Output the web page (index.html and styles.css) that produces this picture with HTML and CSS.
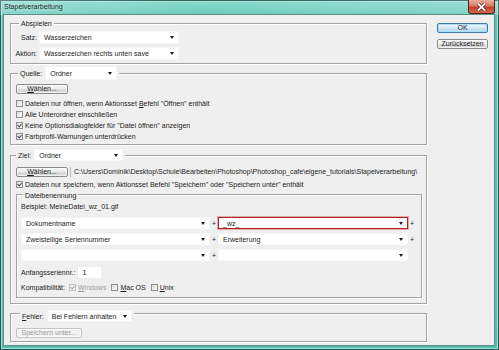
FILE: index.html
```html
<!DOCTYPE html>
<html lang="de">
<head>
<meta charset="utf-8">
<title>Stapelverarbeitung</title>
<link rel="stylesheet" href="styles.css">
</head>
<body>
<div class="window">
  <div class="titlebar">
    <span class="title">Stapelverarbeitung</span>
    <div class="close">
      <svg width="11" height="8" viewBox="0 0 11 8"><path d="M2 0.5 L9 7.5 M9 0.5 L2 7.5" stroke="#5a1a10" stroke-width="3.2"/><path d="M2 0.5 L9 7.5 M9 0.5 L2 7.5" stroke="#fff" stroke-width="1.8"/></svg>
    </div>
  </div>
  <div class="client">
    <div class="main">
      <div class="group g-play">
        <div class="legend lg-play">Abspielen</div>
        <div class="form-grid">
          <span class="lbl">Satz:</span>
          <div class="select s-satz"><span>Wasserzeichen</span><i class="arrow"></i></div>
          <span class="lbl">Aktion:</span>
          <div class="select s-satz"><span>Wasserzeichen rechts unten save</span><i class="arrow"></i></div>
        </div>
      </div>

      <div class="group g-src">
        <div class="legend lg-src"><span>Quelle:</span><div class="select s-src"><span>Ordner</span><i class="arrow"></i></div></div>
        <button class="btn b-choose"><u>W</u>ählen...</button>
        <div class="checks">
          <div class="chk"><span class="box"></span><span>Dateien nur öffnen, wenn Aktionsset <u>B</u>efehl "Öffnen" enthält</span></div>
          <div class="chk"><span class="box"></span><span>Alle Unterordner einschließen</span></div>
          <div class="chk"><span class="box on"></span><span>Keine Optionsdialogfelder für "Datei öffnen" anzeigen</span></div>
          <div class="chk"><span class="box on"></span><span>Farbprofil-Warnungen unterdrücken</span></div>
        </div>
      </div>

      <div class="group g-dst">
        <div class="legend lg-dst"><span>Ziel:</span><div class="select s-dst"><span>Ordner</span><i class="arrow"></i></div></div>
        <div class="pathrow">
          <button class="btn b-choose"><u>W</u>ählen...</button>
          <span class="path">C:\Users\Dominik\Desktop\Schule\Bearbeiten\Photoshop\Photoshop_cafe\eigene_tutorials\Stapelverarbeitung\</span>
        </div>
        <div class="chk chk-save"><span class="box on"></span><span>Dateien nur speichern, wenn Aktionsset Befehl "Speichern" oder "Speichern unter" enthält</span></div>

        <div class="group g-name">
          <div class="legend lg-name">Dateibenennung</div>
          <div class="example">Beispiel: MeineDatei_wz_01.gif</div>
          <div class="name-grid">
            <div class="select"><span>Dokumentname</span><i class="arrow"></i></div>
            <span class="plus">+</span>
            <div class="select focus"><span>_wz_</span><i class="arrow"></i></div>
            <span class="plus">+</span>

            <div class="select"><span>Zweistellige Seriennummer</span><i class="arrow"></i></div>
            <span class="plus">+</span>
            <div class="select"><span>Erweiterung</span><i class="arrow"></i></div>
            <span class="plus">+</span>

            <div class="select"><span></span><i class="arrow"></i></div>
            <span class="plus">+</span>
            <div class="select"><span></span><i class="arrow"></i></div>
            <span></span>
          </div>
          <div class="serial"><span>Anfangsseriennr.:</span><span class="input">1</span></div>
          <div class="compat">
            <span class="compat-lbl">Kompatibilität:</span>
            <span class="chk dis"><span class="box on"></span><span><u>W</u>indows</span></span>
            <span class="chk"><span class="box"></span><span><u>M</u>ac OS</span></span>
            <span class="chk"><span class="box"></span><span><u>U</u>nix</span></span>
          </div>
        </div>
      </div>

      <div class="group g-err">
        <div class="legend lg-err"><span><u>F</u>ehler:</span><div class="select s-err"><span>Bei Fehlern anhalten</span><i class="arrow"></i></div></div>
        <button class="btn b-saveas" disabled>Speichern unter...</button>
      </div>
    </div>

    <div class="side">
      <button class="btn b-ok">OK</button>
      <button class="btn b-reset">Zurücksetzen</button>
    </div>
  </div>
</div>
</body>
</html>
```

FILE: styles.css
```css
* { box-sizing: border-box; margin: 0; padding: 0; }
html, body { width: 499px; height: 350px; overflow: hidden; }
body {
  font-family: "Liberation Sans", Arial, sans-serif;
  font-size: 7px;
  color: #1c1c1c;
  background: #4fb8a8;
}
u { text-decoration: underline; }

.window {
  width: 499px;
  height: 350px;
  display: flex;
  flex-direction: column;
  background: linear-gradient(180deg, #86d8cb 0px, #6fcfbf 10px, #5bc3b3 16px, #55bdad 100%);
  box-shadow: inset 0 0 0 1px #24574f, inset 0 0 0 2px #9fe3d8;
}

.titlebar {
  height: 15px;
  display: flex;
  align-items: flex-start;
  padding-left: 4px;
  background: linear-gradient(90deg, rgba(255,255,255,0.25) 0, rgba(255,255,255,0.05) 40%, rgba(255,255,255,0.2) 100%);
}
.title {
  line-height: 14px;
  color: #0b1f1c;
  text-shadow: 0 0 3px rgba(255,255,255,0.9);
}
.close {
  margin-left: auto;
  margin-right: 4px;
  width: 27px;
  height: 14px;
  border: 1px solid #5a2218;
  border-top: none;
  border-radius: 0 0 3px 3px;
  background: linear-gradient(180deg, #eab0a0 0%, #d77a66 45%, #c0432c 55%, #d0684e 100%);
  display: flex;
  align-items: center;
  justify-content: center;
}

.client {
  margin: 0 5px 0 4px;
  height: 330px;
  background: #efefef;
  box-shadow: 0 0 0 1px #5f8f87;
  display: flex;
  padding: 8px 0 0 6px;
}
.main { width: 417px; display: flex; flex-direction: column; }
.side { width: 51px; margin-left: 10px; display: flex; flex-direction: column; }

.group {
  border: 1px solid #a3a3a3;
  box-shadow: inset 1px 1px 0 #fff, 1px 1px 0 #fff;
}
.legend {
  background: #efefef;
  width: max-content;
  display: flex;
  align-items: center;
  padding: 0 2px;
}

/* Abspielen */
.g-play { height: 41px; }
.lg-play { height: 9px; margin: -5px 0 0 8px; }
.form-grid {
  display: grid;
  grid-template-columns: 26px 140px;
  grid-auto-rows: 13px;
  column-gap: 2px;
  row-gap: 3px;
  margin-top: 3px;
  align-items: center;
}
.lbl { text-align: right; }

.select {
  height: 13px;
  background: #fff;
  border: 1px solid #f6f6f6;
  display: flex;
  align-items: center;
  justify-content: space-between;
  padding: 0 4px 0 4px;
  white-space: nowrap;
  line-height: 9px;
}
.arrow {
  width: 0; height: 0;
  border-left: 2px solid transparent;
  border-right: 2px solid transparent;
  border-top: 3px solid #1a1a1a;
  flex: none;
}

/* Quelle */
.g-src { margin-top: 9px; height: 72px; }
.lg-src { height: 14px; margin: -8px 0 0 7px; gap: 3px; }
.s-src { width: 72px; height: 14px; }

.btn {
  font-family: inherit;
  font-size: 7px;
  color: #1c1c1c;
  height: 10px;
  line-height: 8px;
  border: 1px solid #8a8a8a;
  border-radius: 2px;
  background: linear-gradient(180deg, #f6f6f6 0%, #ebebeb 50%, #dcdcdc 51%, #d2d2d2 100%);
  box-shadow: inset 0 0 0 1px rgba(255,255,255,0.7);
  text-align: center;
}
.b-choose { width: 52px; margin: 4px 0 0 5px; }

.checks { margin-top: 4px; margin-left: 5px; display: flex; flex-direction: column; }
.chk { height: 11px; display: flex; align-items: center; gap: 2px; white-space: nowrap; }
.box {
  width: 7px; height: 7px; flex: none;
  border: 1px solid #8e8f8f;
  background: linear-gradient(135deg, #dcdcdc, #fafafa);
  position: relative;
}
.box.on::after {
  content: "";
  position: absolute;
  left: 1px; top: 0px;
  width: 2px; height: 3px;
  border-right: 1px solid #3b4a5c;
  border-bottom: 1px solid #3b4a5c;
  transform: rotate(40deg);
}

/* Ziel */
.g-dst { margin-top: 10px; height: 149px; }
.lg-dst { height: 12px; margin: -7px 0 0 5px; gap: 3px; }
.s-dst { width: 89px; height: 12px; }
.pathrow { display: flex; align-items: center; margin-top: 6px; height: 10px; }
.pathrow .b-choose { margin: 0 0 0 5px; }
.path {
  margin-left: 2px;
  padding-left: 3px;
  border-left: 1px solid #b8b8b8;
  white-space: nowrap;
  line-height: 10px;
}
.chk-save { margin: 2px 0 0 5px; }

.g-name { margin: 4px 4px 0 5px; height: 104px; }
.lg-name { height: 10px; margin: -5px 0 0 6px; }
.example { height: 10px; line-height: 10px; margin: 2px 0 0 4px; }

.name-grid {
  display: grid;
  grid-template-columns: 189px 8px 190px 8px;
  grid-auto-rows: 12px;
  row-gap: 4px;
  margin: 5px 0 0 4px;
  align-items: center;
}
.name-grid .select { height: 12px; }
.plus { text-align: center; }
.select.focus {
  border: 1px solid #b42020;
  box-shadow: 0 0 0 1px #e7a9a9;
}

.serial { display: flex; align-items: center; gap: 3px; margin: 6px 0 0 4px; height: 11px; }
.input { width: 23px; height: 11px; background: #fff; padding-left: 4px; line-height: 11px; }

.compat { display: flex; align-items: center; margin: 4px 0 0 4px; height: 11px; }
.compat-lbl { width: 48px; }
.compat .chk { margin-right: 5px; }
.compat .chk.dis { color: #9c9c9c; }
.compat .chk.dis .box { border-color: #c2c2c2; background: #f2f2f2; }
.compat .chk.dis .box.on::after { border-color: #a5a5a5; }

/* Fehler */
.g-err { margin-top: 9px; height: 29px; }
.lg-err { height: 12px; margin: -4px 0 0 9px; gap: 3px; }
.s-err { width: 85px; height: 12px; }
.b-saveas {
  width: 66px;
  margin: 6px 0 0 5px;
  color: #9c9c9c;
  border-color: #c4c4c4;
  background: #f2f2f2;
}

/* side buttons */
.b-ok {
  width: 51px;
  border-color: #3d7bad;
  box-shadow: inset 0 0 0 1px #a8e0f8;
  background: linear-gradient(180deg, #eaf5fc 0%, #dcecf7 50%, #c6e1f3 51%, #bcdcf1 100%);
}
.b-reset { width: 51px; margin-top: 6px; }
```
